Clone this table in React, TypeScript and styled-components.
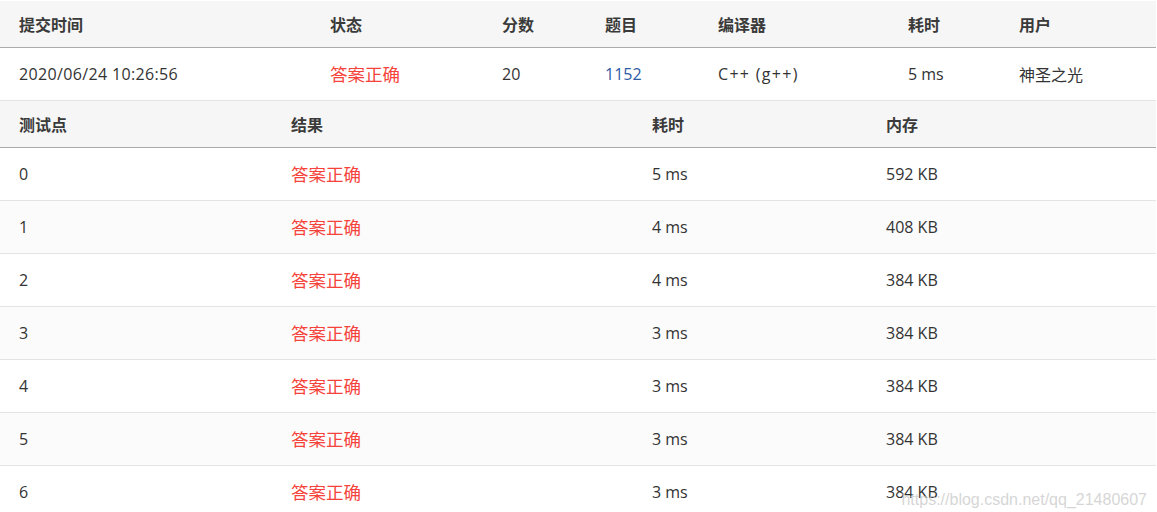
import React from "react";
import styled, { createGlobalStyle } from "styled-components";

const Global = createGlobalStyle`
  html, body { margin: 0; padding: 0; background: #fff; }
  body { font-family: "Open Sans", "Noto Sans CJK SC", sans-serif; color: #333; }
`;

const Page = styled.div`
  position: relative;
  width: 1156px;
  padding-top: 1px;
`;

const Row = styled.div<{ $cols: string; $head?: boolean; $striped?: boolean }>`
  display: grid;
  grid-template-columns: ${(p) => p.$cols};
  height: ${(p) => (p.$head ? "46px" : "52px")};
  align-items: center;
  background: ${(p) => (p.$head ? "#f6f6f6" : p.$striped ? "#fbfbfb" : "#fff")};
  border-bottom: 1px solid ${(p) => (p.$head ? "#ababab" : "#e4e4e4")};
  font-size: 16px;
  font-weight: ${(p) => (p.$head ? 700 : 400)};
  color: ${(p) => (p.$head ? "#3a3a3a" : "#333")};
`;

const Cell = styled.div<{ $spacing?: number }>`
  padding-left: 19px;
  white-space: nowrap;
  letter-spacing: ${(p) => (p.$spacing ? `${p.$spacing}px` : "normal")};
`;

const Status = styled(Cell)`
  color: #f5433b;
  font-size: 17.5px;
  padding-bottom: 2px;
`;

const Link = styled(Cell)`
  color: #2d5ba6;
`;

const Watermark = styled.div`
  position: absolute;
  right: 9px;
  bottom: 10px;
  font-family: "Liberation Sans", Arial, sans-serif;
  font-size: 16px;
  color: rgba(200, 200, 200, 0.75);
  pointer-events: none;
`;

const topCols = "311px 172px 103px 113px 190px 111px 156px";
const testCols = "272px 361px 234px 289px";

const tests = [
  { id: 0, time: "5 ms", mem: "592 KB" },
  { id: 1, time: "4 ms", mem: "408 KB" },
  { id: 2, time: "4 ms", mem: "384 KB" },
  { id: 3, time: "3 ms", mem: "384 KB" },
  { id: 4, time: "3 ms", mem: "384 KB" },
  { id: 5, time: "3 ms", mem: "384 KB" },
  { id: 6, time: "3 ms", mem: "384 KB" },
];

export default function App() {
  return (
    <Page>
      <Global />
      <Row $cols={topCols} $head>
        <Cell>提交时间</Cell>
        <Cell>状态</Cell>
        <Cell>分数</Cell>
        <Cell>题目</Cell>
        <Cell>编译器</Cell>
        <Cell>耗时</Cell>
        <Cell>用户</Cell>
      </Row>
      <Row $cols={topCols}>
        <Cell $spacing={0.35}>2020/06/24 10:26:56</Cell>
        <Status>答案正确</Status>
        <Cell>20</Cell>
        <Link>1152</Link>
        <Cell $spacing={1.3}>C++ (g++)</Cell>
        <Cell>5 ms</Cell>
        <Cell>神圣之光</Cell>
      </Row>
      <Row $cols={testCols} $head>
        <Cell>测试点</Cell>
        <Cell>结果</Cell>
        <Cell>耗时</Cell>
        <Cell>内存</Cell>
      </Row>
      {tests.map((t) => (
        <Row key={t.id} $cols={testCols} $striped={t.id % 2 === 1}>
          <Cell>{t.id}</Cell>
          <Status>答案正确</Status>
          <Cell>{t.time}</Cell>
          <Cell>{t.mem}</Cell>
        </Row>
      ))}
      <Watermark>https://blog.csdn.net/qq_21480607</Watermark>
    </Page>
  );
}
